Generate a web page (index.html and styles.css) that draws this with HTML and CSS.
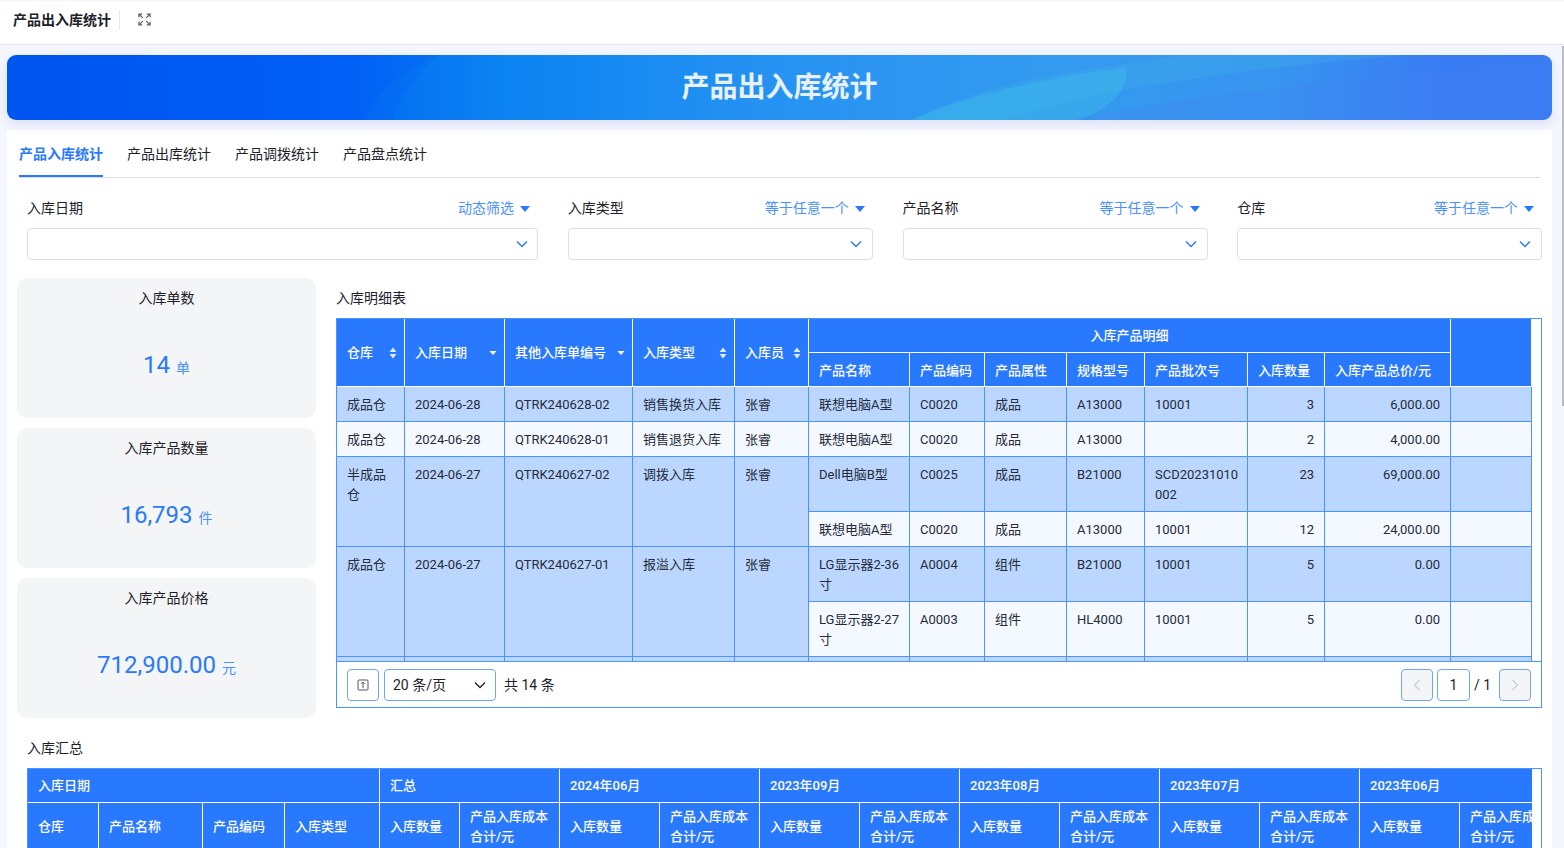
FILE: index.html
```html
<!DOCTYPE html>
<html lang="zh-CN">
<head>
<meta charset="utf-8">
<title>产品出入库统计</title>
<link rel="stylesheet" href="styles.css">
</head>
<body>
<header class="topbar">
  <span class="topbar-title">产品出入库统计</span>
  <span class="topbar-sep"></span>
  <svg class="expand-icon" viewBox="0 0 14 14" fill="none" stroke="#4e5969" stroke-width="1.3">
    <path d="M1 4.5V1.2H4.5M9.5 1.2H13V4.5M1 9.5V12.8H4.5M13 9.5V12.8H9.5"/>
    <path d="M1.5 1.7L5.2 5.2M12.5 1.7L8.8 5.2M1.5 12.3L5.2 8.8M12.5 12.3L8.8 8.8"/>
  </svg>
</header>
<div class="scroll-thumb"></div>
<main class="content">
  <section class="banner">
    <svg class="banner-art" viewBox="0 0 1545 65" preserveAspectRatio="none">
      <path d="M358 65C365 40 395 15 432 0H1545V65Z" fill="#18a4f0" opacity=".08"/>
      <path d="M385 65C392 42 410 18 432 0H1545V65Z" fill="#18a4f0" opacity=".1"/>
      <path d="M905 65C960 35 1040 18 1180 0H1400C1250 12 1080 35 1000 65Z" fill="#3fb4ea" opacity=".28"/>
      <path d="M1065 65C1150 45 1300 30 1545 2V65Z" fill="#4a80f5" opacity=".22"/>
      <path d="M905 65C960 40 1030 25 1120 12C1120 40 1100 55 1070 65Z" fill="#3fc0e8" opacity=".38"/>
    </svg>
    <h1 class="banner-title">产品出入库统计</h1>
  </section>
  <section class="card">
    <nav class="tabs">
      <span class="tab tab-active">产品入库统计</span>
      <span class="tab">产品出库统计</span>
      <span class="tab">产品调拨统计</span>
      <span class="tab">产品盘点统计</span>
    </nav>
    <div class="filters">
      <div class="filter">
        <div class="filter-head"><span>入库日期</span><span class="filter-op">动态筛选<i class="caret"></i></span></div>
        <div class="filter-input"><svg class="chev" viewBox="0 0 12 8" fill="none" stroke="#2979ff" stroke-width="1.4"><path d="M1 1.5L6 6.5L11 1.5"/></svg></div>
      </div>
      <div class="filter">
        <div class="filter-head"><span>入库类型</span><span class="filter-op">等于任意一个<i class="caret"></i></span></div>
        <div class="filter-input"><svg class="chev" viewBox="0 0 12 8" fill="none" stroke="#2979ff" stroke-width="1.4"><path d="M1 1.5L6 6.5L11 1.5"/></svg></div>
      </div>
      <div class="filter">
        <div class="filter-head"><span>产品名称</span><span class="filter-op">等于任意一个<i class="caret"></i></span></div>
        <div class="filter-input"><svg class="chev" viewBox="0 0 12 8" fill="none" stroke="#2979ff" stroke-width="1.4"><path d="M1 1.5L6 6.5L11 1.5"/></svg></div>
      </div>
      <div class="filter">
        <div class="filter-head"><span>仓库</span><span class="filter-op">等于任意一个<i class="caret"></i></span></div>
        <div class="filter-input"><svg class="chev" viewBox="0 0 12 8" fill="none" stroke="#2979ff" stroke-width="1.4"><path d="M1 1.5L6 6.5L11 1.5"/></svg></div>
      </div>
    </div>

    <div class="main-row">
      <aside class="stats">
        <div class="stat"><div class="stat-title">入库单数</div><div class="stat-value">14<span class="stat-unit">单</span></div></div>
        <div class="stat"><div class="stat-title">入库产品数量</div><div class="stat-value">16,793<span class="stat-unit">件</span></div></div>
        <div class="stat"><div class="stat-title">入库产品价格</div><div class="stat-value">712,900.00<span class="stat-unit">元</span></div></div>
      </aside>
      <div class="detail">
        <div class="section-title">入库明细表</div>
        <div class="table-box">
          <div class="table-scroll">
            <table class="grid detail-table">
              <colgroup>
                <col class="w68"><col class="w100"><col class="w128"><col class="w102"><col class="w74">
                <col class="w101"><col class="w75"><col class="w82"><col class="w78"><col class="w103"><col class="w77"><col class="w126"><col class="w81">
              </colgroup>
              <thead>
                <tr>
                  <th rowspan="2"><div class="th-sort">仓库<svg class="sort" viewBox="0 0 8 12" fill="#fff"><path d="M4 0.5L7.5 5H0.5ZM4 11.5L0.5 7H7.5Z" opacity=".85"/></svg></div></th>
                  <th rowspan="2"><div class="th-sort">入库日期<svg class="sort" viewBox="0 0 8 12" fill="#fff"><path d="M4 8L0.5 4H7.5Z"/></svg></div></th>
                  <th rowspan="2"><div class="th-sort">其他入库单编号<svg class="sort" viewBox="0 0 8 12" fill="#fff"><path d="M4 8L0.5 4H7.5Z"/></svg></div></th>
                  <th rowspan="2"><div class="th-sort">入库类型<svg class="sort" viewBox="0 0 8 12" fill="#fff"><path d="M4 0.5L7.5 5H0.5ZM4 11.5L0.5 7H7.5Z" opacity=".85"/></svg></div></th>
                  <th rowspan="2"><div class="th-sort">入库员<svg class="sort" viewBox="0 0 8 12" fill="#fff"><path d="M4 0.5L7.5 5H0.5ZM4 11.5L0.5 7H7.5Z" opacity=".85"/></svg></div></th>
                  <th colspan="7" class="center">入库产品明细</th>
                  <th rowspan="2"></th>
                </tr>
                <tr class="sub">
                  <th>产品名称</th><th>产品编码</th><th>产品属性</th><th>规格型号</th><th>产品批次号</th><th>入库数量</th><th>入库产品总价/元</th>
                </tr>
              </thead>
              <tbody>
                <tr class="odd"><td>成品仓</td><td>2024-06-28</td><td>QTRK240628-02</td><td>销售换货入库</td><td>张睿</td><td>联想电脑A型</td><td>C0020</td><td>成品</td><td>A13000</td><td>10001</td><td class="num">3</td><td class="num">6,000.00</td><td></td></tr>
                <tr class="even"><td>成品仓</td><td>2024-06-28</td><td>QTRK240628-01</td><td>销售退货入库</td><td>张睿</td><td>联想电脑A型</td><td>C0020</td><td>成品</td><td>A13000</td><td></td><td class="num">2</td><td class="num">4,000.00</td><td></td></tr>
                <tr class="odd"><td rowspan="2">半成品仓</td><td rowspan="2">2024-06-27</td><td rowspan="2">QTRK240627-02</td><td rowspan="2">调拨入库</td><td rowspan="2">张睿</td><td>Dell电脑B型</td><td>C0025</td><td>成品</td><td>B21000</td><td>SCD20231010<br>002</td><td class="num">23</td><td class="num">69,000.00</td><td></td></tr>
                <tr class="even"><td>联想电脑A型</td><td>C0020</td><td>成品</td><td>A13000</td><td>10001</td><td class="num">12</td><td class="num">24,000.00</td><td></td></tr>
                <tr class="odd"><td rowspan="2">成品仓</td><td rowspan="2">2024-06-27</td><td rowspan="2">QTRK240627-01</td><td rowspan="2">报溢入库</td><td rowspan="2">张睿</td><td>LG显示器2-36<br>寸</td><td>A0004</td><td>组件</td><td>B21000</td><td>10001</td><td class="num">5</td><td class="num">0.00</td><td></td></tr>
                <tr class="even"><td>LG显示器2-27<br>寸</td><td>A0003</td><td>组件</td><td>HL4000</td><td>10001</td><td class="num">5</td><td class="num">0.00</td><td></td></tr>
                <tr class="odd"><td></td><td></td><td></td><td></td><td></td><td></td><td></td><td></td><td></td><td></td><td></td><td></td><td></td></tr>
              </tbody>
            </table>
          </div>
          <div class="pager">
            <button class="pg-btn" type="button"><svg class="pg-icon" viewBox="0 0 12 12" fill="none" stroke="#4e5969" stroke-width="1"><rect x="1" y="1" width="10" height="10" rx="1"/><path d="M6 9.2V3.2M4.3 4.8L6 3L7.7 4.8"/></svg></button>
            <div class="pg-size"><span>20 条/页</span><svg class="pg-chev" viewBox="0 0 12 8" fill="none" stroke="#1d2129" stroke-width="1.3"><path d="M1 1.5L6 6.5L11 1.5"/></svg></div>
            <span class="pg-total">共 14 条</span>
            <div class="pg-right">
              <button class="pg-btn pg-off" type="button"><svg class="pg-arrow" viewBox="0 0 8 12" fill="none" stroke="#c9cdd4" stroke-width="1.2"><path d="M6.5 1L1.5 6L6.5 11"/></svg></button>
              <span class="pg-cur">1</span>
              <span class="pg-of">/ 1</span>
              <button class="pg-btn pg-off" type="button"><svg class="pg-arrow" viewBox="0 0 8 12" fill="none" stroke="#c9cdd4" stroke-width="1.2"><path d="M1.5 1L6.5 6L1.5 11"/></svg></button>
            </div>
          </div>
        </div>
      </div>
    </div>

    <div class="summary">
      <div class="section-title">入库汇总</div>
      <div class="summary-box">
        <div class="summary-scroll">
        <table class="grid summary-table">
          <colgroup>
            <col class="w71"><col class="w104"><col class="w82"><col class="w95"><col class="w80"><col class="w100"><col class="w100"><col class="w100"><col class="w100"><col class="w100"><col class="w100"><col class="w100"><col class="w100"><col class="w100"><col class="w100"><col class="w100">
          </colgroup>
          <thead>
            <tr>
              <th colspan="4">入库日期</th><th colspan="2">汇总</th><th colspan="2">2024年06月</th><th colspan="2">2023年09月</th><th colspan="2">2023年08月</th><th colspan="2">2023年07月</th><th colspan="2">2023年06月</th>
            </tr>
            <tr class="tall">
              <th>仓库</th><th>产品名称</th><th>产品编码</th><th>入库类型</th>
              <th>入库数量</th><th>产品入库成本合计/元</th>
              <th>入库数量</th><th>产品入库成本合计/元</th>
              <th>入库数量</th><th>产品入库成本合计/元</th>
              <th>入库数量</th><th>产品入库成本合计/元</th>
              <th>入库数量</th><th>产品入库成本合计/元</th>
              <th>入库数量</th><th>产品入库成本合计/元</th>
            </tr>
          </thead>
        </table>
        </div>
      </div>
    </div>
  </section>
</main>
</body>
</html>
```

FILE: styles.css
```css
* { box-sizing: border-box; }
html, body { margin: 0; height: 848px; overflow: hidden; }
body {
  background: #f4f7fe;
  color: #1d2129;
  font-family: Roboto, "Noto Sans CJK SC", sans-serif;
  font-size: 14px;
  line-height: 20px;
  position: relative;
}
.topbar {
  height: 45px;
  background: #fff;
  border-bottom: 1px solid #e5e8ef;
  display: flex;
  align-items: center;
  padding: 0 0 5px 13px;
  box-shadow: inset 0 2px 2px -1px #f0f1f3;
}
.topbar-title { font-weight: 700; color: #1d2129; }
.topbar-sep { width: 1px; height: 20px; background: #e5e8ef; margin: 0 18px 0 8px; }
.expand-icon { width: 13px; height: 13px; display: block; }
.scroll-thumb {
  position: absolute; right: 0; top: 46px; width: 2px; height: 360px;
  background: #b9bcc2; z-index: 5;
}
.content { position: relative; padding: 10px 12px 0 7px; }
.banner {
  position: relative; z-index: 2;
  height: 65px;
  border-radius: 9px;
  overflow: hidden;
  background: linear-gradient(90deg, #0054ef 0, #005ff6 22%, #0a7cf2 32%, #2b90f3 50%, #3b98f0 68%, #3f92f0 82%, #4274f5 93%, #4272f5 100%);
  display: flex; align-items: center; justify-content: center;
  box-shadow: 0 4px 12px rgba(90, 90, 190, .16);
}
.banner-art { position: absolute; inset: 0; width: 100%; height: 100%; }
.banner-title {
  position: relative; margin: 0;
  font-size: 28px; line-height: 40px; font-weight: 700; color: #e6f1fc;
}
.card { margin-top: 10px; background: #fff; height: 760px; }
.tabs {
  margin: 0 12px;
  height: 48px;
  border-bottom: 1px solid #dcdfe4;
  display: flex; gap: 24px;
}
.tab { height: 47px; padding-top: 14px; color: #1d2129; }
.tab-active { color: #2979ff; font-weight: 700; border-bottom: 2px solid #2979ff; }
.filters {
  margin: 0 10px 0 20px;
  padding-top: 20px;
  display: grid;
  grid-template-columns: 511px 305px 305px 1fr;
  column-gap: 29.75px;
}
.filter-head { display: flex; justify-content: space-between; height: 20px; margin-bottom: 10px; padding: 0 8px 0 0; }
.filter-op { color: #4a90ff; display: flex; align-items: center; }
.caret {
  width: 0; height: 0; margin-left: 6px; margin-top: 2px;
  border: 5px solid transparent; border-top: 6px solid #2979ff; border-bottom: 0;
}
.filter-input {
  height: 32px;
  border: 1px solid #dcdfe4; border-radius: 4px;
  display: flex; align-items: center; justify-content: flex-end;
  padding-right: 10px;
}
.filter:first-child .filter-input { padding-right: 9px; }
.chev { width: 12px; height: 8px; display: block; }
.main-row { margin-top: 18px; padding: 0 10px; display: flex; gap: 20px; }
.stats { width: 299px; flex: none; display: flex; flex-direction: column; gap: 10px; }
.stat {
  height: 140px; background: #f4f5f7; border-radius: 10px;
  padding-top: 10px; text-align: center;
}
.stat-title { color: #1d2129; height: 20px; }
.stat-value { margin-top: 40px; font-size: 24px; line-height: 34px; color: #2979ff; }
.stat-unit { font-size: 14px; margin-left: 6px; color: #4a90ff; }
.detail { flex: 1; min-width: 0; }
.section-title { height: 20px; margin: 10px 0; }
.table-box { height: 390px; border: 1px solid #4b93ff; background: #fff; display: flex; flex-direction: column; }
.table-scroll { height: 342px; overflow: hidden; flex: none; }
.grid {
  table-layout: fixed;
  border-collapse: separate; border-spacing: 0;
  font-size: 13px; line-height: 20px;
}
.detail-table { width: 1195px; }
.grid th {
  background: #2979ff; color: #fff; font-weight: 500; text-align: left;
  height: 34px; padding: 0 10px;
  border-right: 1px solid #fff; border-bottom: 1px solid #fff;
}
.grid th.center { text-align: center; }
.grid .sub th { padding-top: 2px; }
.grid td {
  padding: 8px 10px 6px;
  border-right: 1px solid #4b93ff; border-bottom: 1px solid #4b93ff;
  vertical-align: top;
  color: #252b3a;
}
.odd td { background: #bbd7ff; height: 35px; }
.even td { background: #f4f8ff; height: 35px; }
.grid td.num { text-align: right; }
.th-sort { display: flex; justify-content: space-between; align-items: center; margin-right: -3px; }
.sort { width: 8px; height: 12px; flex: none; display: block; }
.w68 { width: 68px; } .w100 { width: 100px; } .w128 { width: 128px; } .w102 { width: 102px; }
.w74 { width: 74px; } .w101 { width: 101px; } .w75 { width: 75px; } .w82 { width: 82px; }
.w78 { width: 78px; } .w103 { width: 103px; } .w77 { width: 77px; } .w126 { width: 126px; }
.w81 { width: 81px; } .w71 { width: 71px; } .w104 { width: 104px; } .w95 { width: 95px; } .w80 { width: 80px; }
.pager {
  flex: 1;
  border-top: 1px solid #4b93ff;
  display: flex; align-items: flex-start;
  padding: 7px 10px 0;
}
.pg-btn {
  width: 32px; height: 32px; padding: 0;
  border: 1px solid #6fa5f5; border-radius: 4px; background: #fff;
  display: flex; align-items: center; justify-content: center;
}
.pg-off { background: #f4f5f7; }
.pg-icon { width: 12px; height: 12px; display: block; }
.pg-arrow { width: 8px; height: 12px; display: block; }
.pg-size {
  width: 112px; height: 32px; margin-left: 5px;
  border: 1px solid #6fa5f5; border-radius: 4px;
  display: flex; align-items: center; justify-content: space-between;
  padding: 0 9px 0 8px;
}
.pg-chev { width: 12px; height: 8px; display: block; }
.pg-total { margin-left: 8px; line-height: 32px; }
.pg-right { margin-left: auto; display: flex; align-items: center; }
.pg-cur {
  width: 33px; height: 32px; margin-left: 4px;
  border: 1px solid #6fa5f5; border-radius: 4px;
  text-align: center; line-height: 30px;
}
.pg-of { width: 29px; padding-left: 4px; line-height: 32px; }
.summary { margin: 0 10px 0 20px; padding-top: 10px; }
.summary-box { border: 1px solid #4b93ff; padding-right: 9px; background: #fff; }
.summary-scroll { overflow: hidden; }
.summary-table { width: 1532px; }
.grid .tall th { height: 47px; padding-top: 4px; padding-bottom: 2px; }
```
